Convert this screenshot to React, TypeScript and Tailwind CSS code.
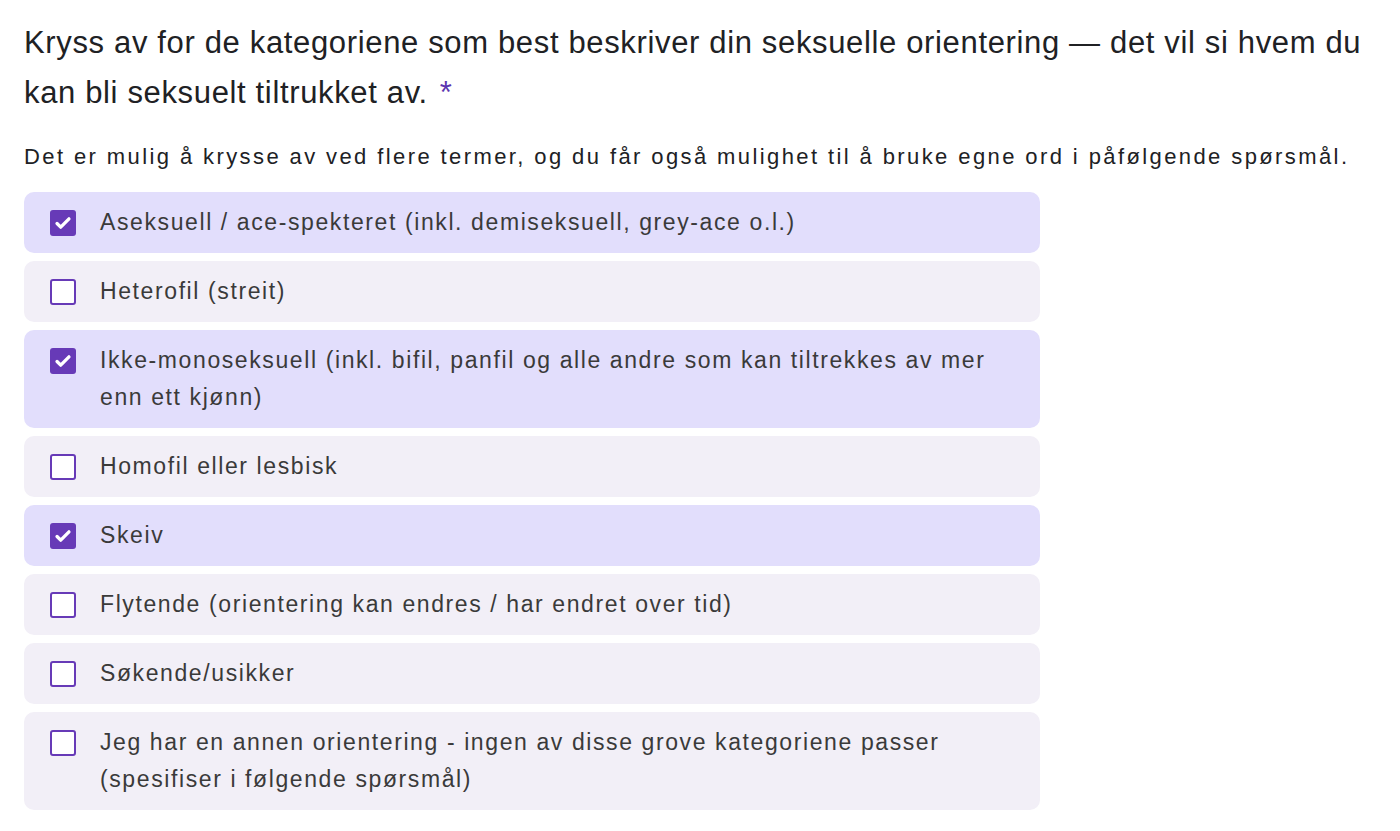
import React from 'react';

const OPTIONS = [
  { label: 'Aseksuell / ace-spekteret (inkl. demiseksuell, grey-ace o.l.)', checked: true },
  { label: 'Heterofil (streit)', checked: false },
  { label: 'Ikke-monoseksuell (inkl. bifil, panfil og alle andre som kan tiltrekkes av mer enn ett kjønn)', checked: true },
  { label: 'Homofil eller lesbisk', checked: false },
  { label: 'Skeiv', checked: true },
  { label: 'Flytende (orientering kan endres / har endret over tid)', checked: false },
  { label: 'Søkende/usikker', checked: false },
  { label: 'Jeg har en annen orientering - ingen av disse grove kategoriene passer (spesifiser i følgende spørsmål)', checked: false },
];

const Checkbox: React.FC<{ checked: boolean }> = ({ checked }) =>
  checked ? (
    <span className="mt-[6px] flex h-[26px] w-[26px] shrink-0 items-center justify-center rounded-[3px] bg-[#673ab7]">
      <svg viewBox="0 0 24 24" className="h-[22px] w-[22px]" fill="none" stroke="white" strokeWidth="3.6" strokeLinecap="round" strokeLinejoin="round">
        <path d="M5.5 12.5l4 4L18.5 7.5" />
      </svg>
    </span>
  ) : (
    <span className="mt-[6px] h-[26px] w-[26px] shrink-0 rounded-[3px] border-2 border-[#673ab7] bg-white" />
  );

const App: React.FC = () => {
  return (
    <div className="min-h-screen bg-white px-6 pt-[18px] text-[#202124]" style={{ fontFamily: '"Liberation Sans", Arial, sans-serif' }}>
      <h1 className="text-[31px] leading-[50px] tracking-[0.65px]">
        Kryss av for de kategoriene som best beskriver din seksuelle orientering — det vil si hvem du kan bli seksuelt tiltrukket av.
        <span className="ml-3 text-[#5c35b0]">*</span>
      </h1>
      <p className="mt-6 text-[22px] leading-[30px] tracking-[2.4px] text-[#202124]">
        Det er mulig å krysse av ved flere termer, og du får også mulighet til å bruke egne ord i påfølgende spørsmål.
      </p>

      <div className="mt-5 flex w-[1016px] flex-col gap-2">
        {OPTIONS.map(opt => (
          <label
            key={opt.label}
            className={`flex items-start gap-6 rounded-[10px] py-3 pl-[26px] pr-6 ${opt.checked ? 'bg-[#e2defc]' : 'bg-[#f2eff7]'}`}
          >
            <Checkbox checked={opt.checked} />
            <span className="text-[23px] leading-[37px] tracking-[1.6px] text-[#3a3a3a]">{opt.label}</span>
          </label>
        ))}
      </div>
    </div>
  );
};

export default App;
